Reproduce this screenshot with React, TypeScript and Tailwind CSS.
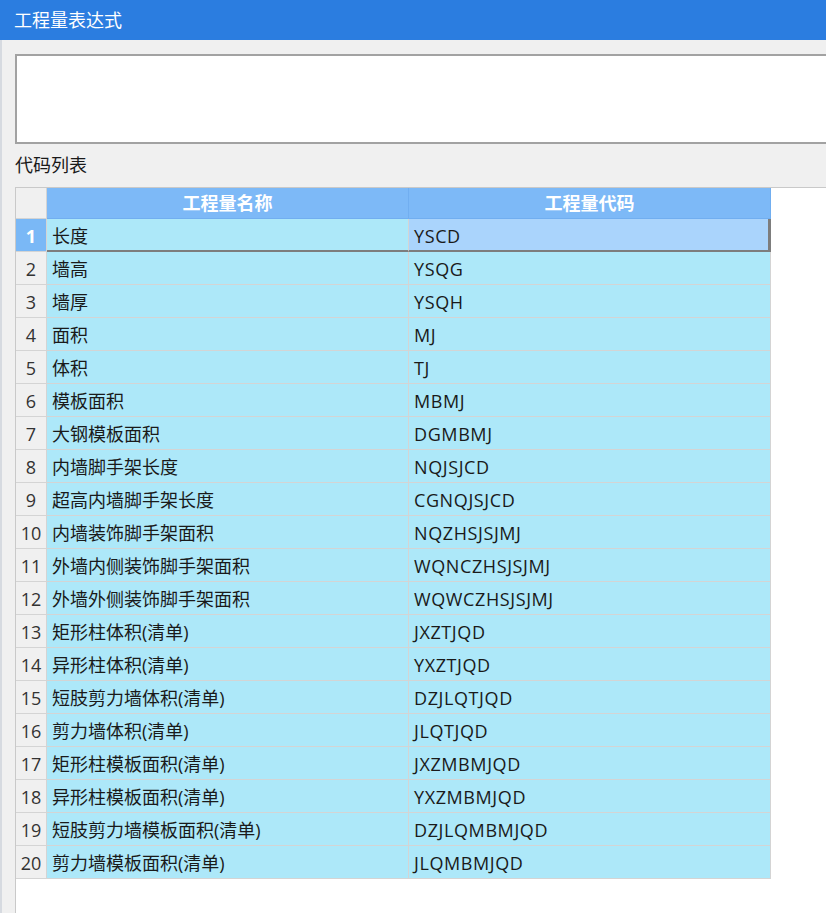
import React from "react";

const rows: [string, string][] = [
  ["长度", "YSCD"],
  ["墙高", "YSQG"],
  ["墙厚", "YSQH"],
  ["面积", "MJ"],
  ["体积", "TJ"],
  ["模板面积", "MBMJ"],
  ["大钢模板面积", "DGMBMJ"],
  ["内墙脚手架长度", "NQJSJCD"],
  ["超高内墙脚手架长度", "CGNQJSJCD"],
  ["内墙装饰脚手架面积", "NQZHSJSJMJ"],
  ["外墙内侧装饰脚手架面积", "WQNCZHSJSJMJ"],
  ["外墙外侧装饰脚手架面积", "WQWCZHSJSJMJ"],
  ["矩形柱体积(清单)", "JXZTJQD"],
  ["异形柱体积(清单)", "YXZTJQD"],
  ["短肢剪力墙体积(清单)", "DZJLQTJQD"],
  ["剪力墙体积(清单)", "JLQTJQD"],
  ["矩形柱模板面积(清单)", "JXZMBMJQD"],
  ["异形柱模板面积(清单)", "YXZMBMJQD"],
  ["短肢剪力墙模板面积(清单)", "DZJLQMBMJQD"],
  ["剪力墙模板面积(清单)", "JLQMBMJQD"],
];

export default function App() {
  return (
    <div
      className="w-[826px] h-[913px] overflow-hidden bg-[#f0f0f0] flex flex-col text-[18px] text-[#1a1a1a]"
      style={{ fontFamily: '"Open Sans","Noto Sans CJK SC",sans-serif' }}
    >
      <div className="h-[40px] shrink-0 bg-[#2b7de0] text-white pl-[14px] flex items-center leading-none">
        工程量表达式
      </div>
      <div className="flex-1 flex flex-col border-l-2 border-[#d6dae0] pl-[13px] pt-[14px] min-h-0">
        <div className="h-[90px] w-[830px] shrink-0 border-2 border-[#a2a2a2] bg-white" />
        <div className="mt-[10px] h-[22px] leading-[22px] shrink-0">代码列表</div>
        <div className="mt-[11px] flex-1 w-[830px] border-t border-l border-[#c9c9c9] bg-white">
          <div className="grid grid-cols-[31px_362px_362px]">
            <div className="h-[31px] bg-[#f0f0f0] border-r border-b border-[#d4d4d4]" />
            <div className="h-[31px] bg-[#7db9f7] border-r border-b border-[#71aef0] text-white font-semibold flex items-center justify-center leading-none">
              工程量名称
            </div>
            <div className="h-[31px] bg-[#7db9f7] border-r border-b border-[#71aef0] text-white font-semibold flex items-center justify-center leading-none">
              工程量代码
            </div>
            {rows.map(([name, code], i) =>
              i === 0 ? (
                <React.Fragment key={i}>
                  <div className="h-[33px] bg-[#7ab8f6] border-r border-b border-[#d4d4d4] text-white font-bold flex items-center justify-center leading-none pt-[2px]">
                    1
                  </div>
                  <div className="h-[33px] bg-[#ade8f9] border-r border-[#d4d4d4] border-b-2 border-b-[#7d7d7d] flex items-center pl-[5px] leading-none pt-[2px]">
                    {name}
                  </div>
                  <div className="h-[33px] bg-[#aad4fc] border-r-[3px] border-b-2 border-[#7d7d7d] flex items-center pl-[5px] leading-none pt-[2px] tracking-[0.6px]">
                    {code}
                  </div>
                </React.Fragment>
              ) : (
                <React.Fragment key={i}>
                  <div className="h-[33px] bg-[#f0f0f0] border-r border-b border-[#d4d4d4] text-[#333] flex items-center justify-center leading-none pt-[2px]">
                    {i + 1}
                  </div>
                  <div className="h-[33px] bg-[#ade8f9] border-r border-b border-[#d4d4d4] flex items-center pl-[5px] leading-none whitespace-nowrap pt-[2px]">
                    {name}
                  </div>
                  <div className="h-[33px] bg-[#ade8f9] border-r border-b border-[#d4d4d4] flex items-center pl-[5px] leading-none pt-[2px] tracking-[0.6px]">
                    {code}
                  </div>
                </React.Fragment>
              )
            )}
          </div>
        </div>
      </div>
    </div>
  );
}
